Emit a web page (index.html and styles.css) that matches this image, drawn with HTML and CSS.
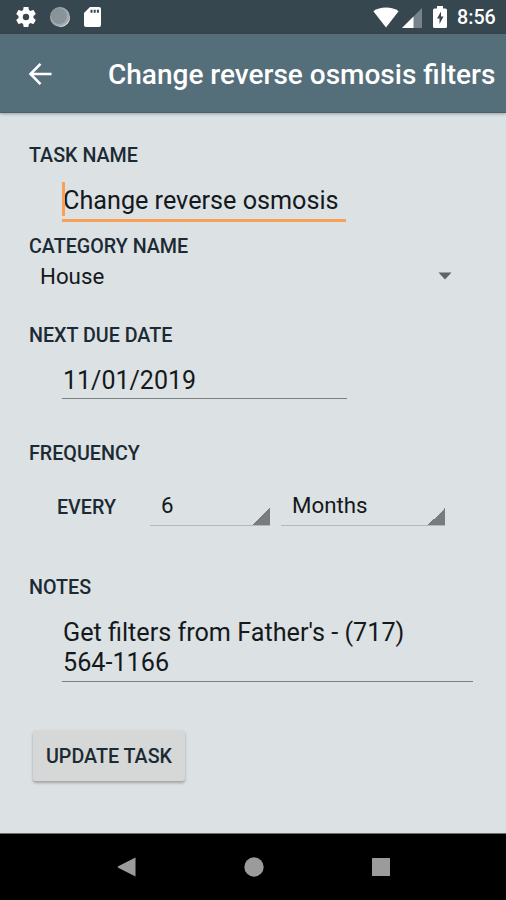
FILE: index.html
```html
<!DOCTYPE html>
<html lang="en">
<head>
    <meta charset="UTF-8">
    <meta name="viewport" content="width=device-width, initial-scale=1.0">
    <title>Change reverse osmosis filters</title>
    <link rel="stylesheet" href="styles.css">
</head>
<body>

    <div class="status-bar">
        <div class="status-left">
            <svg width="22" height="22" viewBox="1 1 22 22"><path fill="#fff" d="M19.43 12.98c.04-.32.07-.64.07-.98s-.03-.66-.07-.98l2.11-1.65c.19-.15.24-.42.12-.64l-2-3.46c-.12-.22-.39-.3-.61-.22l-2.49 1c-.52-.4-1.08-.73-1.69-.98l-.38-2.65C14.46 2.18 14.25 2 14 2h-4c-.25 0-.46.18-.49.42l-.38 2.65c-.61.25-1.17.59-1.69.98l-2.49-1c-.23-.09-.49 0-.61.22l-2 3.46c-.13.22-.07.49.12.64l2.11 1.65c-.04.32-.07.65-.07.98s.03.66.07.98l-2.11 1.65c-.19.15-.24.42-.12.64l2 3.46c.12.22.39.3.61.22l2.49-1c.52.4 1.08.73 1.69.98l.38 2.65c.03.24.24.42.49.42h4c.25 0 .46-.18.49-.42l.38-2.65c.61-.25 1.17-.59 1.69-.98l2.49 1c.23.09.49 0 .61-.22l2-3.46c.12-.22.07-.49-.12-.64l-2.11-1.65zM12 15.2a3.2 3.2 0 1 1 0-6.4 3.2 3.2 0 0 1 0 6.4z"/></svg>
            <svg width="22" height="22" viewBox="0 0 22 22"><circle cx="11" cy="11" r="10" fill="#a3abae"/><path fill="#f4f6f6" d="M20.900 9.500A10 10 0 0 1 8 20.500 11 11 0 0 0 20.900 9.500z"/><circle cx="10" cy="10" r="8" fill="#87959b"/></svg>
            <svg width="18" height="22" viewBox="0 0 18 22"><path fill="#fff" d="M7 1h9a2 2 0 0 1 2 2v16a2 2 0 0 1-2 2H3a2 2 0 0 1-2-2V7z"/><path fill="#37474f" d="M7.500 3.700h2v3h-2zM10.700 3.700h2v3h-2zM13.900 3.700h2v3h-2z"/></svg>
        </div>
        <div class="status-right">
            <svg width="26" height="21" viewBox="0 0 26 21"><path fill="#fff" d="M13 20.500.4 4.200C3.500 2 8 .6 13 .6s9.500 1.400 12.600 3.600z"/></svg>
            <svg class="signal" width="20" height="20" viewBox="0 0 20 20"><path fill="#76838a" d="M20 0v20H0z"/><path fill="#fff" d="M11.500 8.500V20H0z"/></svg>
            <svg class="battery" width="14" height="22" viewBox="0 0 14 22"><path fill="#fff" d="M4 0h6v2.500h2.500A1.500 1.500 0 0 1 14 4v16.500a1.500 1.500 0 0 1-1.500 1.500h-11A1.500 1.500 0 0 1 0 20.500V4a1.500 1.500 0 0 1 1.500-1.500H4z"/><path fill="#37474f" d="M8 5.500 4 12.500h2.500v5.500l4-7.500H8z"/></svg>
            <span class="clock">8:56</span>
        </div>
    </div>

    <div class="app-bar">
        <svg class="back" width="24" height="24" viewBox="0 0 24 24"><path fill="none" stroke="#fff" stroke-width="2.600" d="M23.500 12H2.500M12.500 1.800 2.500 12l10 10.200"/></svg>
        <h1>Change reverse osmosis filters</h1>
    </div>

    <main class="form">
        <div class="label">TASK NAME</div>
        <div class="field task-field"><span class="cursor"></span>Change reverse osmosis</div>

        <div class="label">CATEGORY NAME</div>
        <div class="category">
            <span>House</span>
            <svg width="14" height="8" viewBox="0 0 14 8"><path fill="#5f6466" d="M.5.500h13L7 7.500z"/></svg>
        </div>

        <div class="label due-label">NEXT DUE DATE</div>
        <div class="field date-field">11/01/2019</div>

        <div class="label">FREQUENCY</div>
        <div class="frequency">
            <div class="label every">EVERY</div>
            <div class="spinner count">6</div>
            <div class="spinner unit">Months</div>
        </div>

        <div class="label notes-label">NOTES</div>
        <div class="field notes">Get filters from Father's - (717)<br>564-1166</div>

        <button class="update">UPDATE TASK</button>
    </main>

    <nav class="nav-bar">
        <svg width="20" height="20" viewBox="0 0 20 20"><path fill="#9b9b9b" d="M18.500.500v19L1.200 10.800a1 1 0 0 1 0-1.600z"/></svg>
        <svg width="20" height="20" viewBox="0 0 20 20"><circle cx="10" cy="10" r="9.700" fill="#9b9b9b"/></svg>
        <svg width="20" height="20" viewBox="0 0 20 20"><rect x="1" y="1" width="18" height="18" rx=".5" fill="#9b9b9b"/></svg>
    </nav>

</body>
</html>
```

FILE: styles.css
```css
* {
    margin: 0;
    padding: 0;
    box-sizing: border-box;
}

body {
    width: 506px;
    height: 900px;
    display: flex;
    flex-direction: column;
    overflow: hidden;
    font-family: Roboto, sans-serif;
    background-color: #dce1e4;
    color: #14191c;
}

svg {
    display: block;
}

/* Android status bar */
.status-bar {
    height: 34px;
    display: flex;
    justify-content: space-between;
    padding: 0 11px 0 15px;
    background-color: #37474f;
}

.status-left,
.status-right {
    display: flex;
    align-items: center;
}

.status-left {
    gap: 12px;
}

.signal {
    margin: 2px 11px 0 3px;
}

.battery {
    margin-right: 10px;
}

.clock {
    width: 38px;
    font-size: 19.7px;
    font-weight: 500;
    line-height: 34px;
    color: #fff;
    padding-top: 2px;
    white-space: nowrap;
}

/* Title bar */
.app-bar {
    height: 79px;
    display: flex;
    align-items: center;
    padding: 1px 0 0 28px;
    background-color: #546e7a;
    border-bottom: 1px solid #48606b;
    box-shadow: 0 1px 3px rgba(0, 0, 0, 0.3);
}

.app-bar h1 {
    margin-left: 56px;
    padding-top: 1px;
    font-size: 28px;
    font-weight: 500;
    color: #fff;
    white-space: nowrap;
}

/* Form */
.form {
    height: 720px;
    padding: 31px 33px 0 29px;
}

.label {
    height: 24px;
    font-size: 19.7px;
    font-weight: 500;
    line-height: 24px;
    color: #1b2a33;
    white-space: nowrap;
}

.field {
    margin-left: 33px;
    padding-left: 1px;
    font-size: 25.2px;
    line-height: 30px;
    border-bottom: 1px solid #7b8083;
    white-space: nowrap;
}

.task-field {
    position: relative;
    width: 284px;
    height: 54px;
    padding-top: 18px;
    border-bottom: 3px solid #f9a056;
    margin-bottom: 13px;
}

.cursor {
    position: absolute;
    left: 0;
    top: 14px;
    width: 3px;
    height: 34px;
    background-color: #f9a056;
}

.category {
    height: 34px;
    display: flex;
    align-items: center;
    justify-content: space-between;
    padding: 0 21px 0 11px;
    font-size: 22.3px;
}

.due-label {
    margin-top: 31px;
}

.date-field {
    width: 285px;
    height: 51px;
    padding-top: 18px;
    margin-bottom: 43px;
    font-size: 25px;
}

.frequency {
    height: 60px;
    display: flex;
    align-items: flex-end;
    padding-left: 28px;
}

.every {
    width: 93px;
    margin-bottom: 6px;
}

.spinner {
    height: 38px;
    padding-left: 11px;
    font-size: 22.3px;
    line-height: 35px;
    border-bottom: 1px solid #b3b8ba;
    background: linear-gradient(135deg, transparent 50%, #787c7e 50%) right bottom / 17px 17px no-repeat;
}

.count {
    width: 120px;
    margin-right: 11px;
}

.unit {
    width: 164px;
}

.notes-label {
    margin-top: 50px;
}

.notes {
    width: 411px;
    height: 82px;
    padding-top: 18px;
}

.update {
    display: block;
    width: 152px;
    height: 51px;
    margin: 48px 0 0 4px;
    padding-top: 2px;
    font-family: inherit;
    font-size: 19.7px;
    font-weight: 500;
    color: #1b2a33;
    background-color: #d6d8d8;
    border: none;
    border-radius: 3px;
    box-shadow: 0 2px 3px rgba(0, 0, 0, 0.28);
    white-space: nowrap;
}

/* Android navigation bar */
.nav-bar {
    height: 67px;
    display: flex;
    justify-content: center;
    align-items: center;
    gap: 107px;
    padding-left: 1px;
    background-color: #000;
    border-top: 1px solid #6b6e6f;
}
```
